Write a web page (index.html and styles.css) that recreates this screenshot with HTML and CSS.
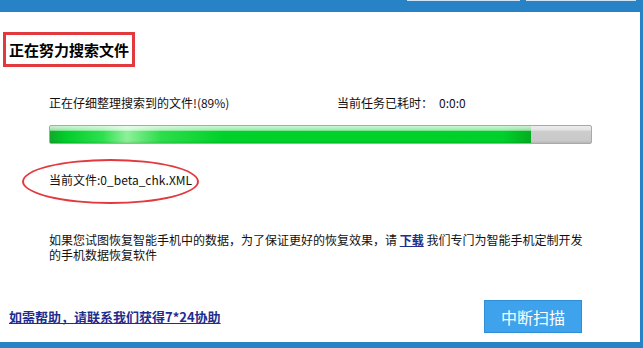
FILE: index.html
```html
<!DOCTYPE html>
<html lang="zh-CN">
<head>
<meta charset="utf-8">
<title>正在努力搜索文件</title>
<link rel="stylesheet" href="styles.css">
</head>
<body>
<div class="window">
  <div class="titlebar">
    <span class="cap cap-a"></span>
    <span class="cap cap-b"></span>
  </div>
  <div class="content">
    <div class="heading">正在努力搜索文件</div>
    <div class="status">
      <span class="status-text">正在仔细整理搜索到的文件!(89%)</span>
      <span class="elapsed">当前任务已耗时：<span class="time">0:0:0</span></span>
    </div>
    <div class="bar"><div class="fill" style="width:89%"></div></div>
    <div class="current">
      <span class="ring"></span>
      当前文件:<span class="fname">0_beta_chk.XML</span>
    </div>
    <div class="note">
      <p class="note-line">如果您试图恢复智能手机中的数据，为了保证更好的恢复效果，请 <a class="dl" href="#">下载</a> 我们专门为智能手机定制开发</p>
      <p class="note-line">的手机数据恢复软件</p>
    </div>
    <div class="footer">
      <a class="help" href="#">如需帮助，请联系我们获得7*24协助</a>
      <button class="stop" type="button">中断扫描</button>
    </div>
  </div>
</div>
</body>
</html>
```
FILE: styles.css
```css
html, body {
  margin: 0;
  padding: 0;
  background: #ffffff;
}
body {
  width: 643px;
  height: 348px;
  overflow: hidden;
  font-family: "Noto Sans CJK SC", "Noto Sans", sans-serif;
  font-size: 12px;
  color: #111111;
}
.window {
  display: flex;
  flex-direction: column;
  width: 643px;
  height: 348px;
}
.titlebar {
  height: 12px;
  background: #2783c6;
  display: flex;
  align-items: flex-start;
  padding-left: 407px;
  gap: 6px;
}
.cap {
  display: block;
  height: 1px;
  background: #cfe3f3;
}
.cap-a { width: 113px; }
.cap-b { width: 110px; }
.content {
  flex: 1;
  border-right: 3px solid #2783c6;
  border-bottom: 6px solid #2783c6;
  display: flex;
  flex-direction: column;
}
.heading {
  margin: 20px 0 0 3px;
  width: 123px;
  height: 29px;
  border: 3px solid #e2393f;
  font-size: 15px;
  font-weight: bold;
  line-height: 29px;
  padding-left: 3px;
  color: #000;
  white-space: nowrap;
}
.status {
  margin: 28px 0 0 49px;
  display: grid;
  grid-template-columns: 288px auto;
  line-height: 16px;
}
.time {
  margin-left: 6px;
}
.bar {
  margin: 14px 0 0 49px;
  width: 541px;
  height: 17px;
  border: 1px solid #a9a9a9;
  border-radius: 2px;
  background: linear-gradient(to bottom, #ececec 0%, #e2e2e2 25%, #cdcdcd 30%, #c9c9c9 85%, #b8b8b8 100%);
  overflow: hidden;
}
.fill {
  height: 100%;
  background:
    linear-gradient(to bottom, rgba(255,255,255,0.8) 0%, rgba(255,255,255,0.6) 25%, rgba(255,255,255,0) 32%, rgba(255,255,255,0) 85%, rgba(0,60,0,0.12) 100%),
    linear-gradient(to right, #12a82a 0%, #00cc2a 3%, #2ee04f 11%, #8ef09a 16%, #2edd4c 23%, #00d12a 36%, #00d02b 94%, #03ad20 100%);
}
.current {
  position: relative;
  margin: 28px 0 0 49px;
  line-height: 16px;
}
.ring {
  position: absolute;
  left: -27px;
  top: -13px;
  width: 173px;
  height: 41px;
  border: 2px solid #e2393f;
  border-radius: 50%;
}
.note {
  margin: 45px 0 0 49px;
  display: flex;
  flex-direction: column;
  gap: 1px;
}
.note-line {
  margin: 0;
  line-height: 14px;
  white-space: nowrap;
}
.dl {
  color: #1f2d8f;
  font-weight: bold;
  text-decoration: underline;
}
.footer {
  margin-top: auto;
  margin-bottom: 9px;
  display: flex;
  align-items: center;
  justify-content: space-between;
  padding: 0 58px 0 9px;
}
.help {
  color: #1f2d8f;
  font-size: 13px;
  font-weight: bold;
  text-decoration: underline;
}
.stop {
  width: 98px;
  height: 33px;
  border: 1px solid #2f8fd6;
  background: #3ea2ec;
  color: #ffffff;
  font-family: "Noto Sans CJK SC", "Noto Sans", sans-serif;
  font-size: 16px;
  padding: 0;
}
```
